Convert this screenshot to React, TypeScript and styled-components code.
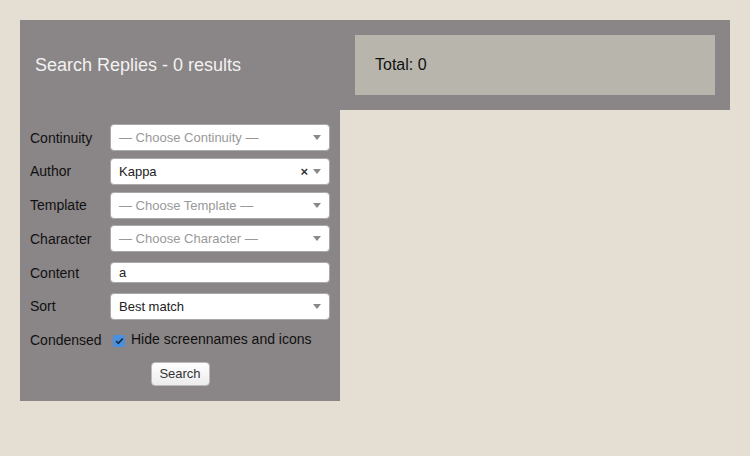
import React from "react";
import styled, { createGlobalStyle } from "styled-components";

const GlobalStyle = createGlobalStyle`
  html, body { margin: 0; padding: 0; background: #e4dfd2; }
  body { font-family: "Liberation Sans", Arial, sans-serif; color: #111; }
`;

const Page = styled.div`
  padding: 20px;
  width: 710px;
`;

const Header = styled.div`
  display: flex;
  align-items: center;
  height: 90px;
  background: #8a8586;
  padding: 0 15px;
`;

const Title = styled.h1`
  flex: 1;
  margin: 0;
  font-size: 18px;
  font-weight: normal;
  color: #f2f2f2;
  line-height: 1;
`;

const TotalBox = styled.div`
  width: 340px;
  height: 60px;
  padding-left: 20px;
  display: flex;
  align-items: center;
  background: #b8b5ad;
  font-size: 16px;
  color: #111;
`;

const Panel = styled.form`
  width: 320px;
  background: #8a8586;
  padding: 14px 0 15px;
  box-sizing: border-box;
`;

const Grid = styled.div`
  display: grid;
  grid-template-columns: 80px 220px;
  grid-auto-rows: 27px;
  row-gap: 6.8px;
  padding-left: 10px;
`;

const Label = styled.div`
  display: flex;
  align-items: center;
  font-size: 14px;
  color: #111;
`;

const Select = styled.div`
  display: flex;
  align-items: center;
  height: 27px;
  box-sizing: border-box;
  border: 1px solid #aaa;
  border-radius: 4px;
  background: #fff;
  padding: 0 8px;
  font-size: 13px;
  color: #222;
`;

const SelectText = styled.span<{ $placeholder?: boolean }>`
  flex: 1;
  color: ${(p) => (p.$placeholder ? "#999" : "#222")};
`;

const Clear = styled.span`
  font-size: 13px;
  font-weight: bold;
  color: #333;
  margin-right: 5px;
  line-height: 1;
`;

const Arrow = styled.span`
  width: 0;
  height: 0;
  border-left: 4px solid transparent;
  border-right: 4px solid transparent;
  border-top: 5px solid #888;
`;

const InputCell = styled.div`
  display: flex;
  align-items: center;
`;

const TextInput = styled.div`
  width: 100%;
  height: 21px;
  box-sizing: border-box;
  border: 1px solid #aaa;
  border-radius: 4px;
  background: #fff;
  padding: 0 8px;
  font-size: 13px;
  display: flex;
  align-items: center;
  color: #222;
`;

const CheckLabel = styled.div`
  display: flex;
  align-items: center;
  gap: 6px;
  padding-left: 3px;
  font-size: 14px;
  color: #111;
`;

const Box = styled.span`
  width: 12px;
  height: 12px;
  border-radius: 2px;
  background: #4a90e2;
  display: flex;
  align-items: center;
  justify-content: center;
  margin-top: 2px;
`;

const CheckText = styled.span`
  margin-top: -3px;
`;

const ButtonRow = styled.div`
  display: flex;
  justify-content: center;
  margin-top: 8px;
`;

const Button = styled.button`
  height: 24px;
  width: 59px;
  font-family: "Liberation Sans", Arial, sans-serif;
  font-size: 13px;
  color: #333;
  background: linear-gradient(#ffffff, #ececec);
  border: 1px solid #bbb;
  border-radius: 4px;
  padding: 0;
`;

const selects = [
  { label: "Continuity", text: "— Choose Continuity —", placeholder: true },
  { label: "Author", text: "Kappa", clear: true },
  { label: "Template", text: "— Choose Template —", placeholder: true },
  { label: "Character", text: "— Choose Character —", placeholder: true },
];

export default function App() {
  return (
    <>
      <GlobalStyle />
      <Page>
        <Header>
          <Title>Search Replies - 0 results</Title>
          <TotalBox>Total: 0</TotalBox>
        </Header>
        <Panel onSubmit={(e) => e.preventDefault()}>
          <Grid>
            {selects.map((s) => (
              <React.Fragment key={s.label}>
                <Label>{s.label}</Label>
                <Select>
                  <SelectText $placeholder={s.placeholder}>{s.text}</SelectText>
                  {s.clear && <Clear>×</Clear>}
                  <Arrow />
                </Select>
              </React.Fragment>
            ))}
            <Label>Content</Label>
            <InputCell>
              <TextInput>a</TextInput>
            </InputCell>
            <Label>Sort</Label>
            <Select>
              <SelectText>Best match</SelectText>
              <Arrow />
            </Select>
            <Label>Condensed</Label>
            <CheckLabel>
              <Box>
                <svg width="9" height="8" viewBox="0 0 9 8">
                  <path d="M1.2 4.2 L3.4 6.3 L7.8 1.5" fill="none" stroke="#1c2a3a" strokeWidth="1.8" />
                </svg>
              </Box>
              <CheckText>Hide screennames and icons</CheckText>
            </CheckLabel>
          </Grid>
          <ButtonRow>
            <Button type="submit">Search</Button>
          </ButtonRow>
        </Panel>
      </Page>
    </>
  );
}
